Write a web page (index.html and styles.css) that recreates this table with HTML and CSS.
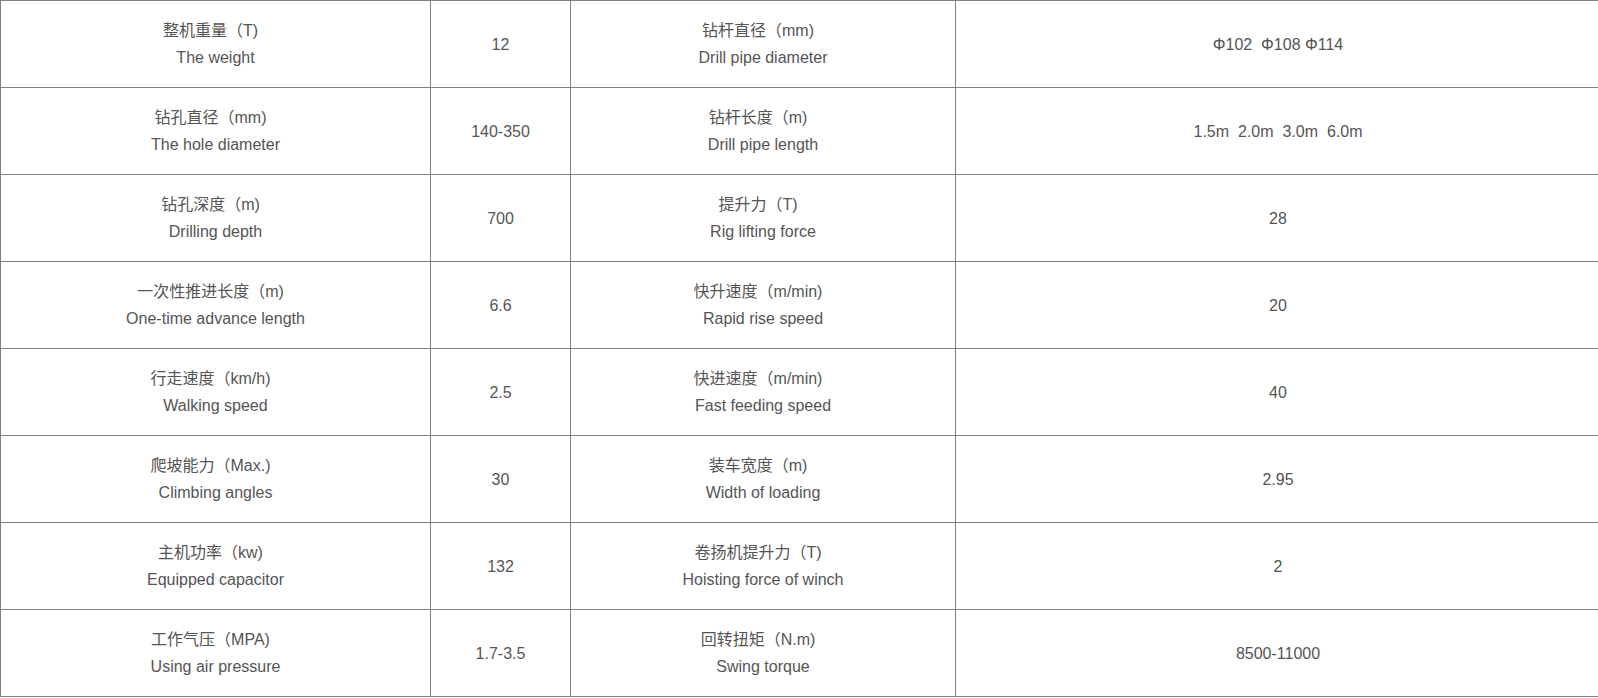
FILE: index.html
```html
<!DOCTYPE html>
<html lang="zh">
<head>
<meta charset="utf-8">
<title>参数表</title>
<link rel="stylesheet" href="styles.css">
</head>
<body>
<table class="spec">
  <colgroup>
    <col class="c1"><col class="c2"><col class="c3"><col class="c4">
  </colgroup>
  <tbody>
    <tr>
      <td><p class="cn">整机重量（T)</p><p>The weight</p></td>
      <td>12</td>
      <td><p class="cn">钻杆直径（mm)</p><p>Drill pipe diameter</p></td>
      <td>Φ102&nbsp; Φ108 Φ114</td>
    </tr>
    <tr>
      <td><p class="cn">钻孔直径（mm)</p><p>The hole diameter</p></td>
      <td>140-350</td>
      <td><p class="cn">钻杆长度（m)</p><p>Drill pipe length</p></td>
      <td>1.5m&nbsp; 2.0m&nbsp; 3.0m&nbsp; 6.0m</td>
    </tr>
    <tr>
      <td><p class="cn">钻孔深度（m)</p><p>Drilling depth</p></td>
      <td>700</td>
      <td><p class="cn">提升力（T)</p><p>Rig lifting force</p></td>
      <td>28</td>
    </tr>
    <tr>
      <td><p class="cn">一次性推进长度（m)</p><p>One-time advance length</p></td>
      <td>6.6</td>
      <td><p class="cn">快升速度（m/min)</p><p>Rapid rise speed</p></td>
      <td>20</td>
    </tr>
    <tr>
      <td><p class="cn">行走速度（km/h)</p><p>Walking speed</p></td>
      <td>2.5</td>
      <td><p class="cn">快进速度（m/min)</p><p>Fast feeding speed</p></td>
      <td>40</td>
    </tr>
    <tr>
      <td><p class="cn">爬坡能力（Max.)</p><p>Climbing angles</p></td>
      <td>30</td>
      <td><p class="cn">装车宽度（m)</p><p>Width of loading</p></td>
      <td>2.95</td>
    </tr>
    <tr>
      <td><p class="cn">主机功率（kw)</p><p>Equipped capacitor</p></td>
      <td>132</td>
      <td><p class="cn">卷扬机提升力（T)</p><p>Hoisting force of winch</p></td>
      <td>2</td>
    </tr>
    <tr>
      <td><p class="cn">工作气压（MPA)</p><p>Using air pressure</p></td>
      <td>1.7-3.5</td>
      <td><p class="cn">回转扭矩（N.m)</p><p>Swing torque</p></td>
      <td>8500-11000</td>
    </tr>
  </tbody>
</table>
</body>
</html>
```
FILE: styles.css
```css
html, body {
  margin: 0;
  padding: 0;
  background: #fff;
  overflow: hidden;
}
body {
  font-family: "Liberation Sans", Arial, "Noto Sans CJK SC", sans-serif;
  font-size: 16px;
  color: #555;
}
.spec {
  border-collapse: collapse;
  table-layout: fixed;
  width: 1600px;
}
.c1 { width: 430px; }
.c2 { width: 140px; }
.c3 { width: 385px; }
.c4 { width: 645px; }
.spec td {
  border: 1px solid #808080;
  height: 86px;
  padding: 0;
  text-align: center;
  vertical-align: middle;
  line-height: 27px;
}
.spec p {
  margin: 0;
}
.spec .cn {
  padding-right: 10px;
}
```
